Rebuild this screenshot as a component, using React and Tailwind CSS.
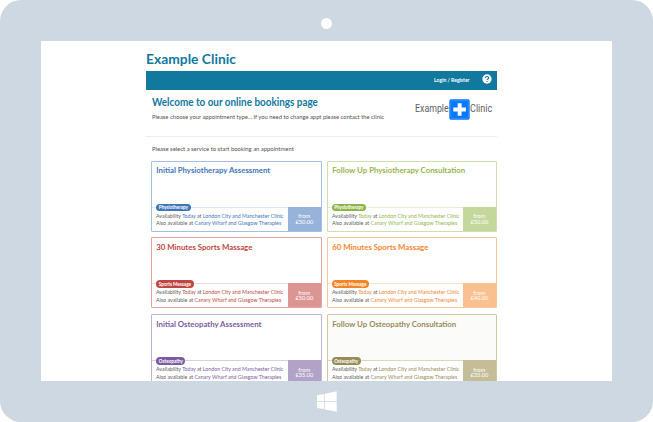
const services = [
  {
    title: "Initial Physiotherapy Assessment", tag: "Physiotherapy", price: "£50.00",
    text: "text-[#3f76b8]", border: "border-[#a4c0e0]", line: "border-[#dde7f4]", pill: "bg-[#3f76b8]", box: "bg-[#97b3d9]", bg: "bg-white",
  },
  {
    title: "Follow Up Physiotherapy Consultation", tag: "Physiotherapy", price: "£50.00",
    text: "text-[#94b650]", border: "border-[#cfdfae]", line: "border-[#e6efd5]", pill: "bg-[#8fb446]", box: "bg-[#c5d89b]", bg: "bg-white",
  },
  {
    title: "30 Minutes Sports Massage", tag: "Sports Message", price: "£50.00",
    text: "text-[#c04643]", border: "border-[#e2a5a4]", line: "border-[#f3d8d7]", pill: "bg-[#bf4643]", box: "bg-[#db9694]", bg: "bg-white",
  },
  {
    title: "60 Minutes Sports Massage", tag: "Sports Message", price: "£40.00",
    text: "text-[#f58531]", border: "border-[#fbc59c]", line: "border-[#fde3cf]", pill: "bg-[#f58426]", box: "bg-[#fac08f]", bg: "bg-white",
  },
  {
    title: "Initial Osteopathy Assessment", tag: "Osteopathy", price: "£35.00",
    text: "text-[#7b5ca0]", border: "border-[#c2b4d6]", line: "border-[#d8cfe5]", pill: "bg-[#7b5ca0]", box: "bg-[#b2a2c7]", bg: "bg-white",
  },
  {
    title: "Follow Up Osteopathy Consultation", tag: "Osteopathy", price: "£35.00",
    text: "text-[#978b57]", border: "border-[#cfc8a3]", line: "border-[#ded8bf]", pill: "bg-[#978b57]", box: "bg-[#c4bd97]", bg: "bg-[#fbfbf9]",
  },
];

function ServiceCard({ service }) {
  return (
    <article className={`flex h-[71px] min-w-0 flex-col overflow-hidden rounded-[1px] border ${service.border} ${service.bg}`}>
      <h3 className={`h-[45px] w-max shrink-0 origin-left scale-x-[0.942] whitespace-nowrap pl-[4.5px] pt-[2.5px] text-[8.3px] font-bold leading-[12px] ${service.text}`}>
        {service.title}
      </h3>
      <div className={`relative flex h-[24px] shrink-0 border-t bg-white ${service.line}`}>
        <span className={`absolute -top-[4px] left-[4px] flex h-[7.5px] items-center rounded-full px-[2.5px] text-[4.6px] font-bold leading-none text-white ${service.pill}`}>
          {service.tag}
        </span>
        <div className="min-w-0 flex-1 whitespace-nowrap pl-[4px] pt-[4px] text-[6.1px] leading-[7.5px] text-[#606060]">
          <p className="w-max origin-left scale-x-[0.864]">Availability <span className={service.text}>Today</span> at <span className={service.text}>London City and Manchester Clinic</span></p>
          <p className="w-max origin-left scale-x-[0.864]">Also available at <span className={service.text}>Canary Wharf and Glasgow Therapies</span></p>
        </div>
        <div className={`-mt-px flex w-[33px] shrink-0 flex-col items-center justify-center text-[6px] leading-[5.4px] text-white ${service.box}`}>
          <span className="scale-x-[0.95]">from</span>
          <span className="scale-x-[0.95]">{service.price}</span>
        </div>
      </div>
    </article>
  );
}

function ClinicLogo() {
  return (
    <div className="flex items-center font-[Roboto,sans-serif] text-[10.5px] leading-none text-[#606060]">
      <span className="w-[34px] whitespace-nowrap"><span className="inline-block origin-left scale-x-[0.84]">Example</span></span>
      <svg className="h-[21px] w-[21px]" viewBox="0 0 21 21">
        <rect x=".3" y=".3" width="20.4" height="20.4" rx="1.8" fill="#0878ff" />
        <rect x="1.7" y="1.7" width="17.6" height="17.6" rx="1" fill="none" stroke="#58a5ff" strokeWidth=".5" />
        <path d="M8.7 4.2h3.9v4.3h4.3v3.9h-4.3v4.4H8.7v-4.4H4.3V8.5h4.4z" fill="white" />
      </svg>
      <span className="w-[23.5px] whitespace-nowrap"><span className="inline-block origin-left scale-x-[0.86]">Clinic</span></span>
    </div>
  );
}

export default function App() {
  return (
    <div className="h-[422px] w-[653px] overflow-hidden bg-white font-[Lato,sans-serif]">
      <div className="flex h-full flex-col items-center rounded-[21px] bg-[#ced8e2]">
        <div className="flex h-[41px] shrink-0 items-center pt-[6px]">
          <div className="h-[11px] w-[11px] rounded-full bg-white" />
        </div>
        <main className="h-[340px] w-[571px] shrink-0 overflow-hidden bg-white pl-[105px]">
          <div className="w-[351px]">
            <h1 className="h-[30px] w-max origin-left scale-x-[0.988] pt-[9px] text-[14px] font-bold leading-[18px] text-[#11789e]">Example Clinic</h1>
            <nav className="flex h-[19px] items-center justify-end gap-[12px] bg-[#11789e] pr-[5px] text-white">
              <span className="origin-right scale-x-[0.92] text-[5.5px] font-bold leading-none">Login / Register</span>
              <svg className="mb-[3px] h-[10px] w-[10px]" viewBox="0 0 9 9">
                <circle cx="4.5" cy="4.5" r="4.2" fill="white" />
                <path d="M3.1 3.5C3.1 1.8 6 1.8 6 3.5c0 1-1.4 1-1.4 2M4.6 6.2v1" fill="none" stroke="#11789e" strokeWidth="1" />
              </svg>
            </nav>
            <header className="flex h-[47px] justify-between border-b border-[#ededed] pl-[5.5px] pr-[4px]">
              <div className="whitespace-nowrap pt-[6px]">
                <h2 className="w-max origin-left scale-x-[0.935] text-[10.6px] font-bold leading-[13px] text-[#11789e]">Welcome to our online bookings page</h2>
                <p className="mt-[4px] w-max origin-left scale-x-[0.97] text-[6px] leading-[8px] text-[#505050]">Please choose your appointment type... If you need to change appt please contact the clinic</p>
              </div>
              <div className="pt-[9px]"><ClinicLogo /></div>
            </header>
            <p className="ml-[5.5px] h-[23.6px] w-max origin-left scale-x-[0.98] pt-[8px] text-[6px] leading-[8px] text-[#505050]">Please select a service to start booking an appointment</p>
            <section className="grid grid-cols-2 gap-x-[5px] gap-y-[5.8px] pl-[5.3px]">
              {services.map((service) => <ServiceCard key={service.title} service={service} />)}
            </section>
          </div>
        </main>
        <footer className="flex flex-1 items-center">
          <svg className="h-[21px] w-[20px]" viewBox="0 0 20 21" fill="white">
            <path d="M0 4.2 7.3 3v7H0zM8 2.8 19.7.2V10H8zM0 10.8h7.3v7.3L0 16.9zM8 10.8h11.7v10L8 18.4z" />
          </svg>
        </footer>
      </div>
    </div>
  );
}
